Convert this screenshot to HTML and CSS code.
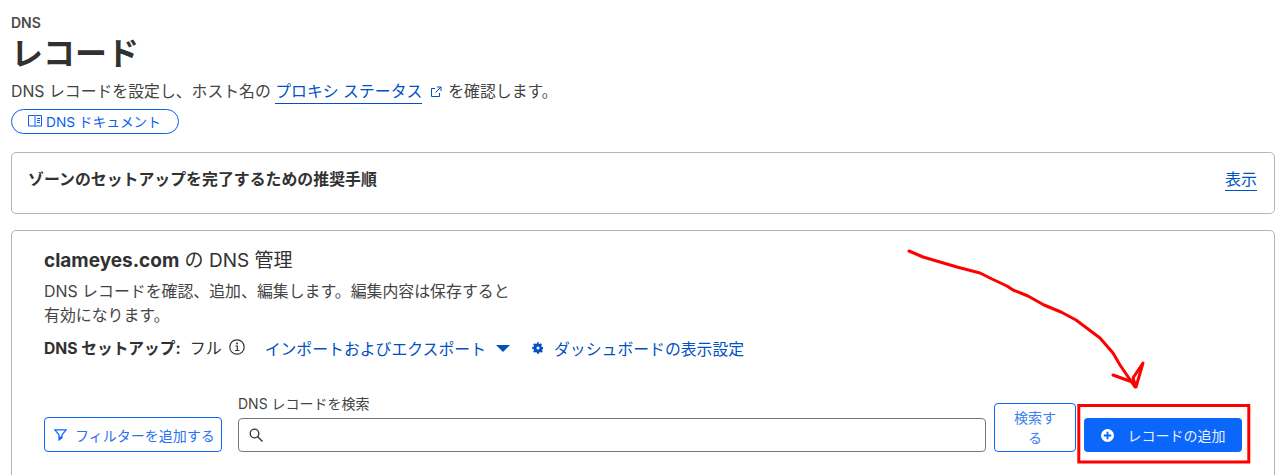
FILE: index.html
```html
<!DOCTYPE html>
<html lang="ja">
<head>
  <meta charset="UTF-8" />
  <meta name="viewport" content="width=device-width, initial-scale=1.0" />
  <title>DNS レコード</title>
  <link rel="stylesheet" href="styles.css">
</head>
<body>
  <header class="head">
    <div class="crumb">DNS</div>
    <h1>レコード</h1>
    <p class="lead">DNS レコードを設定し、ホスト名の <a class="link" href="#">プロキシ ステータス</a>
      <svg class="ext" viewBox="0 0 12 12"><path d="M9.500 7v3.500h-8v-8H5M7 1h4v4M11 1L5.500 6.500" /></svg>
      を確認します。</p>
    <a class="pill" href="#">
      <svg class="book" viewBox="0 0 14 12"><path d="M.5 .5h6l.5.500.5-.5h6v10.500h-6L7 11.500 6.500 11h-6zM7 1v10.500M9 3.500h3M9 5.500h3M9 7.500h3" /></svg>
      DNS ドキュメント</a>
  </header>

  <section class="card card-steps">
    <h2>ゾーンのセットアップを完了するための推奨手順</h2>
    <a class="link show" href="#">表示</a>
  </section>

  <section class="card card-dns">
    <h3><b>clameyes.com</b> の DNS 管理</h3>
    <p class="desc">DNS レコードを確認、追加、編集します。編集内容は保存すると<br>有効になります。</p>
    <div class="setup">
      <span class="setup-label"><b>DNS セットアップ:</b> フル
        <svg class="info" viewBox="0 0 16 16"><circle cx="8" cy="8" r="7.200" /><path d="M6.500 7h1.800v4.500M6 11.500h4.500" /><circle class="dot" cx="8" cy="4.500" r="1" /></svg>
      </span>
      <a class="action" href="#">インポートおよびエクスポート <span class="caret"></span></a>
      <a class="action" href="#">
        <svg class="gear" viewBox="0 0 24 24"><path d="M22 14v-4l-3-.6a7 7 0 0 0-.7-1.700l1.700-2.500-2.800-2.800-2.500 1.700a7 7 0 0 0-1.700-.7L14 .5h-4l-.6 2.900a7 7 0 0 0-1.700.7L5.200 2.400 2.400 5.200l1.700 2.500a7 7 0 0 0-.7 1.700L.5 10v4l2.900.6c.2.600.4 1.200.7 1.700l-1.700 2.500 2.800 2.800 2.500-1.700c.5.300 1.100.5 1.700.7l.6 2.900h4l.6-2.900c.6-.2 1.200-.4 1.700-.7l2.500 1.700 2.800-2.800-1.700-2.500c.3-.5.500-1.100.7-1.700zM12 15a3 3 0 1 1 0-6 3 3 0 0 1 0 6z" /></svg>
        ダッシュボードの表示設定</a>
    </div>
    <div class="toolbar">
      <button class="btn btn-filter">
        <svg class="funnel" viewBox="0 0 13 12"><path d="M.8 .8h11.400L8 5.800v3L5 11V5.800z" /><path class="funnel-tip" d="M5 7.500h3v1.500L5 11.300z" /></svg>
        フィルターを追加する</button>
      <label class="search">
        <span class="search-label">DNS レコードを検索</span>
        <span class="search-box">
          <svg class="glass" viewBox="0 0 14 14"><circle cx="5.500" cy="5.500" r="4.300" /><path d="M8.700 8.700l4.800 4.800" /></svg>
        </span>
      </label>
      <button class="btn btn-search">検索する</button>
      <button class="btn btn-add">
        <svg class="plus" viewBox="0 0 14 14"><circle cx="7" cy="7" r="7" /><path d="M7 3v8M3 7h8" /></svg>
        レコードの追加</button>
    </div>
  </section>

  <!-- 赤い注釈 -->
  <svg class="marks" viewBox="0 0 1285 475">
    <rect x="1078.800" y="405.500" width="170" height="56.500" />
    <path d="M909 251l14 6 17 5 17 5 23 6 12 6 15 7 6 4 15 6 16 9 17 7 15 8 8 6 16 12 13 15 7 12 15 22" />
    <path d="M1113 375l22 8M1143 363l-7 24-3-9z" />
  </svg>
</body>
</html>
```

FILE: styles.css
```css
* { box-sizing: border-box; }
html, body { height: 475px; overflow: hidden; }
body {
  margin: 0;
  padding: 14px 10px 0 11px;
  background: #fff;
  color: #313131;
  font-family: Inter, "Noto Sans CJK JP", sans-serif;
  font-size: 16px;
  position: relative;
}
.crumb { font-size: 14px; font-weight: 600; line-height: 17px; color: #4a4a4a; }
h1 { margin: 3px 0 0; font-size: 32px; font-weight: 700; line-height: 39px; }
.lead { margin: 7px 0 0; font-size: 15.850px; line-height: 24px; color: #444; }
.link { color: #0051c3; text-decoration: none; border-bottom: 1px solid #0051c3; padding-bottom: 2px; }
.ext { width: 12px; height: 12px; margin: 0 2px 0 3px; vertical-align: -1px; fill: none; stroke: #0051c3; stroke-width: 1; }
.pill {
  display: inline-flex;
  align-items: center;
  justify-content: flex-start;
  gap: 4px;
  width: 168px;
  height: 25px;
  margin-top: 5px;
  padding: 0 0 2px 16px;
  border: 1px solid #0a5ff0;
  border-radius: 13px;
  color: #0a5ff0;
  font-size: 13.700px;
  text-decoration: none;
}
.book { flex-shrink: 0; width: 14px; height: 12px; fill: none; stroke: #0a5ff0; stroke-width: 1; }

.card { border: 1px solid #b5b5b5; border-radius: 5px; background: #fff; }
.card-steps {
  display: flex;
  justify-content: space-between;
  align-items: flex-start;
  height: 62px;
  margin-top: 18px;
  padding: 15px 17px 0 16px;
}
h2 { margin: 0; font-size: 15.900px; font-weight: 700; line-height: 24px; }
.show { line-height: 22px; margin-top: 0; padding-bottom: 0; }

.card-dns { height: 300px; margin-top: 16px; padding: 15px 32px 0 32px; }
h3 { margin: 0; font-size: 19px; font-weight: 400; line-height: 29px; }
h3 b { font-weight: 700; }
.desc { margin: 5px 0 0; font-size: 15.900px; line-height: 24px; color: #444; }
.setup { display: flex; align-items: center; margin-top: 8px; height: 24px; }
.setup b { font-size: 15.700px; font-weight: 700; }
.setup-label { display: inline-flex; align-items: center; gap: 9px; margin-top: -2px; }
.info { width: 16px; height: 16px; margin-left: -2px; fill: none; stroke: #313131; stroke-width: 1.200; }
.info .dot { fill: #313131; stroke: none; }
.action { display: inline-flex; align-items: center; font-size: 15.850px; color: #0051c3; text-decoration: none; }
.setup-label + .action { margin-left: 20px; }
.action + .action { margin-left: 22px; }
.caret {
  width: 0;
  height: 0;
  margin-left: 10px;
  border-left: 7px solid transparent;
  border-right: 7px solid transparent;
  border-top: 7px solid #0051c3;
}
.gear { width: 12px; height: 12px; margin-right: 10px; fill: #0051c3; fill-rule: evenodd; }

.toolbar { display: flex; align-items: flex-end; margin-top: 35px; }
.btn {
  flex-shrink: 0;
  height: 35px;
  padding: 0;
  border: 1px solid #0b66fb;
  border-radius: 4px;
  background: #fff;
  color: #0b66fb;
  font: inherit;
  font-size: 14px;
  display: inline-flex;
  align-items: center;
  justify-content: center;
}
.btn-filter { width: 178px; gap: 8px; color: #2a72ee; white-space: nowrap; justify-content: flex-start; padding-left: 9px; }
.funnel { flex-shrink: 0; width: 13px; height: 12px; fill: none; stroke: #0b66fb; stroke-width: 1.200; }
.funnel-tip { fill: #0b66fb; stroke: none; }
.search { display: block; width: 748px; margin-left: 16px; }
.search-label { display: block; font-size: 14px; line-height: 17px; margin-bottom: 6px; color: #444; }
.search-box {
  display: flex;
  align-items: center;
  height: 34px;
  padding-left: 10px;
  border: 1px solid #777;
  border-radius: 4px;
}
.glass { width: 14px; height: 14px; fill: none; stroke: #313131; stroke-width: 1.300; }
.btn-search { width: 82px; height: 49px; margin-left: 8px; padding: 0 14px; line-height: 20px; color: #3d80f0; }
.btn-add { width: 158px; height: 34px; margin-left: 8px; gap: 14px; background: #0b66fb; color: #e8f0fe; border: 0; }
.plus { flex-shrink: 0; width: 13px; height: 13px; }
.plus circle { fill: #fff; }
.plus path { fill: none; stroke: #0b66fb; stroke-width: 2; }

.marks { position: absolute; left: 0; top: 0; width: 1285px; height: 475px; fill: none; stroke: #f00; pointer-events: none; }
.marks rect { stroke-width: 3; }
.marks path { stroke-width: 3; stroke-linecap: round; stroke-linejoin: round; }
```
